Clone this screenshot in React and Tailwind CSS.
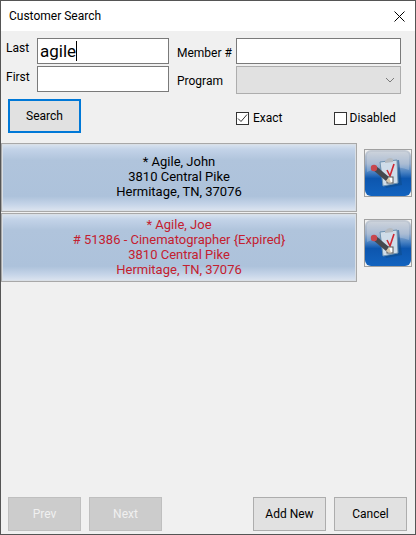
import React from 'react';

const font = '[font-family:Roboto,sans-serif]';

function TaskIcon({ id }) {
  return (
    <svg width="46" height="46" viewBox="0 0 46 46" className="block">
      <defs>
        <linearGradient id={`bg${id}`} x1="0" y1="0" x2="0" y2="1">
          <stop offset="0" stopColor="#c6ccd4" />
          <stop offset="0.3" stopColor="#97acc9" />
          <stop offset="0.48" stopColor="#4a82c2" />
          <stop offset="0.62" stopColor="#0d56ae" />
          <stop offset="1" stopColor="#1263bf" />
        </linearGradient>
      </defs>
      <rect x="0" y="0" width="46" height="46" rx="6" fill={`url(#bg${id})`} />
      <path d="M2 22 Q22 12 44 20 L44 6 Q44 2 40 2 L6 2 Q2 2 2 6 Z" fill="#fff" opacity="0.2" />
      <path d="M16 12 L34 10 L37 35 L21 38 Z" fill="#0e4a86" opacity="0.55" />
      <path d="M15 12 L32 10 L33 33 L18 36 Z" fill="#cfdde9" stroke="#6f93b0" strokeWidth="1" />
      <path d="M20 11 Q24 6 28 9 L28 12 L20 13 Z" fill="#b5babf" />
      <path d="M22 20 L25 26 L29 14" fill="none" stroke="#cf2630" strokeWidth="1.6" />
      <rect x="22" y="27" width="6" height="6" fill="#fff" stroke="#555" strokeWidth="1" />
      <path d="M8 20 L11 16 L24 27 L21 31 Z" fill="#45484e" />
      <circle cx="9" cy="18" r="3.2" fill="#c8474e" />
      <path d="M21 31 L24 27 L26 33 Z" fill="#d8c8ac" />
    </svg>
  );
}

function Card({ children, className }) {
  return (
    <div
      className={`w-[356px] h-[69px] pb-[2px] flex flex-col items-center justify-center border border-[#a8a8a8] outline outline-1 -outline-offset-2 outline-[#d9dfe6] text-[13px] leading-[15px] bg-[linear-gradient(to_bottom,#dbe4ef_0%,#c3d3e8_8%,#b0c4dc_24%,#adc2db_78%,#c5d4e8_90%,#dde5f0_100%)] ${className}`}
    >
      {children}
    </div>
  );
}

function Btn({ children, disabled }) {
  return (
    <div
      className={`w-[73px] h-[34px] flex items-center justify-center border text-xs ${
        disabled ? 'bg-[#cccccc] border-[#bfbfbf] text-[#f0f0f0]' : 'bg-[#e1e1e1] border-[#adadad] text-black'
      }`}
    >
      {children}
    </div>
  );
}

export default function App() {
  return (
    <div className={`w-[416px] h-[535px] flex flex-col border border-[#555555] bg-[#f0f0f0] text-black ${font}`}>
      <div className="h-[30px] bg-white flex items-center justify-between pl-2 pr-[10px] text-xs shrink-0">
        <span>Customer Search</span>
        <svg width="11" height="11" viewBox="0 0 11 11">
          <path d="M0.5 0.5 L10.5 10.5 M10.5 0.5 L0.5 10.5" stroke="#000" strokeWidth="1" fill="none" />
        </svg>
      </div>

      <div className="flex pt-[7px] pl-[5px]">
        <div className="w-[31px] flex flex-col text-xs">
          <div className="h-[28px] pt-[2px]">Last</div>
          <div className="pt-[3px]">First</div>
        </div>
        <div className="w-[132px] flex flex-col gap-[2px]">
          <div className="h-[26px] bg-white border border-[#7a7a7a] pl-[2px] flex items-center text-[17px] leading-none">
            agile<span className="w-px h-[20px] bg-black" />
          </div>
          <input readOnly className="h-[26px] w-full bg-white border border-[#7a7a7a]" />
        </div>
        <div className="w-[59px] ml-[8px] flex flex-col text-xs">
          <div className="h-[28px] pt-[7px]">Member #</div>
          <div className="pt-[7px]">Program</div>
        </div>
        <div className="w-[165px] flex flex-col gap-[2px]">
          <input readOnly className="h-[26px] w-full bg-white border border-[#7a7a7a]" />
          <div className="h-[28px] bg-[#e1e1e1] border border-[#adadad] flex items-center justify-end pr-[5px]">
            <svg width="10" height="6" viewBox="0 0 10 6">
              <path d="M1 1 L5 5 L9 1" stroke="#7a7a7a" strokeWidth="1" fill="none" />
            </svg>
          </div>
        </div>
      </div>

      <div className="flex items-start mt-[5px] pl-[7px]">
        <div className="w-[73px] h-[34px] flex items-center justify-center bg-[#e1e1e1] border-2 border-[#0078d7] text-xs">
          Search
        </div>
        <label className="ml-[155px] mt-[11px] flex items-center text-xs">
          <span className="w-[13px] h-[13px] bg-white border border-[#333333] flex items-center justify-center">
            <svg width="11" height="11" viewBox="0 0 11 11">
              <path d="M1 5.5 L4 8.5 L10 1.5" stroke="#333" strokeWidth="1" fill="none" />
            </svg>
          </span>
          <span className="ml-[4px]">Exact</span>
        </label>
        <label className="ml-[51px] mt-[11px] flex items-center text-xs">
          <span className="w-[13px] h-[13px] bg-white border border-[#333333]" />
          <span className="ml-[3px]">Disabled</span>
        </label>
      </div>

      <div className="flex flex-col gap-px mt-[10px]">
        <div className="flex items-start">
          <Card>
            <div>* Agile, John</div>
            <div>3810 Central Pike</div>
            <div>Hermitage, TN, 37076</div>
          </Card>
          <div className="ml-[7px] mt-[6px] w-[48px] h-[48px] border border-[#a0a0a0]">
            <TaskIcon id="a" />
          </div>
        </div>
        <div className="flex items-start">
          <Card className="text-[#c4202f]">
            <div>* Agile, Joe</div>
            <div># 51386 - Cinematographer {'{Expired}'}</div>
            <div>3810 Central Pike</div>
            <div>Hermitage, TN, 37076</div>
          </Card>
          <div className="ml-[7px] mt-[6px] w-[48px] h-[48px] border border-[#a0a0a0]">
            <TaskIcon id="b" />
          </div>
        </div>
      </div>

      <div className="mt-auto mb-[3px] flex pl-[7px] pr-[8px]">
        <div className="flex gap-2">
          <Btn disabled>Prev</Btn>
          <Btn disabled>Next</Btn>
        </div>
        <div className="ml-auto flex gap-2">
          <Btn>Add New</Btn>
          <Btn>Cancel</Btn>
        </div>
      </div>
    </div>
  );
}
